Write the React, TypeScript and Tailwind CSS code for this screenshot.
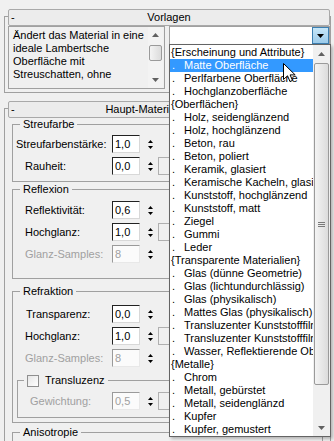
import React from "react";

const listItems: { text: string; group?: boolean; selected?: boolean }[] = [
  { text: "{Erscheinung und Attribute}", group: true },
  { text: "Matte Oberfläche", selected: true },
  { text: "Perlfarbene Oberfläche" },
  { text: "Hochglanzoberfläche" },
  { text: "{Oberflächen}", group: true },
  { text: "Holz, seidenglänzend" },
  { text: "Holz, hochglänzend" },
  { text: "Beton, rau" },
  { text: "Beton, poliert" },
  { text: "Keramik, glasiert" },
  { text: "Keramische Kacheln, glasiert" },
  { text: "Kunststoff, hochglänzend" },
  { text: "Kunststoff, matt" },
  { text: "Ziegel" },
  { text: "Gummi" },
  { text: "Leder" },
  { text: "{Transparente Materialien}", group: true },
  { text: "Glas (dünne Geometrie)" },
  { text: "Glas (lichtundurchlässig)" },
  { text: "Glas (physikalisch)" },
  { text: "Mattes Glas (physikalisch)" },
  { text: "Transluzenter Kunststofffilm (matt)" },
  { text: "Transluzenter Kunststofffilm (klar)" },
  { text: "Wasser, Reflektierende Oberfläche" },
  { text: "{Metalle}", group: true },
  { text: "Chrom" },
  { text: "Metall, gebürstet" },
  { text: "Metall, seidenglänzd" },
  { text: "Kupfer" },
  { text: "Kupfer, gemustert" },
];

function Spinner() {
  return (
    <div className="ml-[5px] flex h-[18px] w-[10px] flex-col items-center justify-center gap-[3px]">
      <svg width="5" height="3" viewBox="0 0 5 3">
        <path d="M2.5 0L5 3H0z" fill="#000" />
      </svg>
      <svg width="5" height="3" viewBox="0 0 5 3">
        <path d="M0 0H5L2.5 3z" fill="#000" />
      </svg>
    </div>
  );
}

function Row({
  label,
  value,
  labelClass,
  disabled,
  map,
}: {
  label: string;
  value: string;
  labelClass: string;
  disabled?: boolean;
  map?: boolean;
}) {
  return (
    <div className="flex h-[18px] items-center">
      <div className={`${labelClass} ${disabled ? "text-[#a0a0a0]" : "text-black"} shrink-0 whitespace-nowrap`}>{label}</div>
      <div
        className={`flex h-[18px] w-[28px] shrink-0 items-center border pl-[2px] ${
          disabled
            ? "border-t-[#9a9a9a] border-l-[#9a9a9a] border-r-[#e8e8e8] border-b-[#e8e8e8] bg-[#fbfbfb] text-[#a0a0a0]"
            : "border-t-[#222] border-l-[#222] border-r-[#d8d8d8] border-b-[#d8d8d8] bg-white text-black"
        }`}
      >
        {value}
      </div>
      <Spinner />
      {map && <div className="ml-[3px] h-[18px] w-[20px] shrink-0 border border-[#b0b0b0] bg-[#f0f0f0]" />}
    </div>
  );
}

function Header({ title }: { title: string }) {
  return (
    <div className="ml-[3px] -mt-[8px] flex h-[17px] w-[322px] items-center rounded-[2px] border border-[#a9a9a9] bg-[#ececec] text-black">
      <span className="w-[10px] pl-[2px]">-</span>
      <span className="flex-1 pr-[10px] text-center whitespace-nowrap">{title}</span>
    </div>
  );
}

export default function App() {
  return (
    <div className="relative h-[441px] w-[334px] overflow-hidden bg-[#f0f0f0] font-['Liberation_Sans',Arial,sans-serif] text-[11px] leading-[13px] text-black">
      {/* Vorlagen rollout */}
      <div className="ml-[4px] mt-[16px] w-[327px] border border-[#a0a0a0] pb-[3px]">
        <Header title="Vorlagen" />
        <div className="ml-[3px] flex gap-[4px]">
          <div className="flex h-[63px] w-[157px] border border-[#a0a0a0] bg-[#f0f0f0]">
            <div className="flex-1 overflow-hidden pl-[4px] pt-[2px] whitespace-nowrap">
              <div>Ändert das Material in eine</div>
              <div>ideale Lambertsche</div>
              <div>Oberfläche mit</div>
              <div>Streuschatten, ohne</div>
            </div>
            <div className="mr-px flex w-[15px] flex-col bg-[#f3f3f3]">
              <div className="flex h-[16px] items-center justify-center">
                <svg width="7" height="4" viewBox="0 0 7 4">
                  <path d="M3.5 0L7 4H0z" fill="#606060" />
                </svg>
              </div>
              <div className="mx-px mt-[2px] h-[16px] rounded-[2px] border border-[#9a9a9a] bg-gradient-to-r from-[#f4f4f4] to-[#dcdcdc]" />
              <div className="flex-1" />
              <div className="flex h-[16px] items-center justify-center">
                <svg width="7" height="4" viewBox="0 0 7 4">
                  <path d="M0 0H7L3.5 4z" fill="#606060" />
                </svg>
              </div>
            </div>
          </div>
          <div className="flex h-[19px] w-[162px] border border-[#a0a0a0] bg-white">
            <div className="flex-1" />
            <div className="flex w-[17px] items-center justify-center border border-[#3c7fb1] bg-gradient-to-b from-[#c6e6f8] to-[#9ccbea]">
              <svg width="7" height="4" viewBox="0 0 7 4">
                <path d="M0 0H7L3.5 4z" fill="#000" />
              </svg>
            </div>
          </div>
        </div>
      </div>

      {/* Haupt-Material-Parameter rollout */}
      <div className="ml-[4px] mt-[15px] h-[340px] w-[327px] border border-[#a0a0a0]">
        <Header title="Haupt-Material-Parameter" />

        <fieldset className="ml-[7px] mr-[7px] border border-[#a0a0a0] pb-[6px]">
          <legend className="ml-[7px] px-[3px]">Streufarbe</legend>
          <div className="flex flex-col gap-[4px] pt-[4px]">
            <Row label="Streufarbenstärke:" value="1,0" labelClass="w-[99px] pl-[3px]" />
            <Row label="Rauheit:" value="0,0" labelClass="w-[99px] pl-[12px]" map />
          </div>
        </fieldset>

        <fieldset className="ml-[7px] mr-[7px] mt-[1px] border border-[#a0a0a0] pb-[15px]">
          <legend className="ml-[7px] px-[3px]">Reflexion</legend>
          <div className="flex flex-col gap-[4px] pt-[5px]">
            <Row label="Reflektivität:" value="0,6" labelClass="w-[99px] pl-[12px]" />
            <Row label="Hochglanz:" value="1,0" labelClass="w-[99px] pl-[12px]" map />
            <Row label="Glanz-Samples:" value="8" labelClass="w-[99px] pl-[12px]" disabled />
          </div>
        </fieldset>

        <fieldset className="ml-[7px] mr-[7px] mt-[6px] border border-[#a0a0a0] pb-[4px]">
          <legend className="ml-[7px] px-[3px]">Refraktion</legend>
          <div className="flex flex-col gap-[4px] pt-[7px]">
            <Row label="Transparenz:" value="0,0" labelClass="w-[99px] pl-[13px]" />
            <Row label="Hochglanz:" value="1,0" labelClass="w-[99px] pl-[12px]" map />
            <Row label="Glanz-Samples:" value="8" labelClass="w-[99px] pl-[12px]" disabled />
          </div>
          <fieldset className="ml-[4px] mr-[5px] mt-[7px] border border-[#a0a0a0] pb-[7px]">
            <legend className="ml-[6px] px-[3px]">
              <div className="flex h-[13px] items-center gap-[6px]">
                <div className="h-[12px] w-[12px] border border-[#8f8f8f] bg-gradient-to-br from-[#e6e6e6] to-white" />
                <span>Transluzenz</span>
              </div>
            </legend>
            <div className="pt-[5px]">
              <Row label="Gewichtung:" value="0,5" labelClass="w-[94px] pl-[12px]" disabled map />
            </div>
          </fieldset>
        </fieldset>

        <fieldset className="ml-[7px] mr-[7px] mt-[3px] h-[60px] border border-[#a0a0a0]">
          <legend className="ml-[7px] px-[3px]">Anisotropie</legend>
        </fieldset>
      </div>

      {/* Open dropdown list */}
      <div className="absolute left-[169px] top-[44px] flex h-[393px] w-[162px] border border-[#646464] bg-white shadow-[2px_2px_3px_rgba(0,0,0,0.25)]">
        <div className="w-[143px] shrink-0 overflow-hidden pt-[1px] whitespace-nowrap">
          {listItems.map((item, i) =>
            item.group ? (
              <div key={i} className="h-[13px] pl-px text-black">
                {item.text}
              </div>
            ) : (
              <div
                key={i}
                className={`flex h-[13px] w-[143px] ${item.selected ? "bg-[#3399ff] text-white" : "text-black"}`}
              >
                <span className="w-[14px] shrink-0 pl-[2px]">.</span>
                <span className="shrink-0 whitespace-nowrap">{item.text}</span>
              </div>
            )
          )}
        </div>
        <div className="flex w-[17px] shrink-0 flex-col bg-[#f0f0f0]">
          <div className="flex h-[17px] items-center justify-center">
            <svg width="7" height="4" viewBox="0 0 7 4">
              <path d="M3.5 0L7 4H0z" fill="#606060" />
            </svg>
          </div>
          <div className="mx-px mt-px flex h-[322px] items-center justify-center rounded-[2px] border border-[#9a9a9a] bg-gradient-to-r from-[#f4f4f4] to-[#dcdcdc]">
            <div className="flex flex-col gap-px">
              <div className="h-px w-[7px] bg-[#7a7a7a]" />
              <div className="h-px w-[7px] bg-[#7a7a7a]" />
              <div className="h-px w-[7px] bg-[#7a7a7a]" />
            </div>
          </div>
          <div className="flex-1" />
          <div className="flex h-[17px] items-center justify-center">
            <svg width="7" height="4" viewBox="0 0 7 4">
              <path d="M0 0H7L3.5 4z" fill="#606060" />
            </svg>
          </div>
        </div>
      </div>

      {/* Mouse cursor */}
      <svg className="absolute left-[283px] top-[63px]" width="14" height="20" viewBox="0 0 14 20">
        <path
          d="M0.5 0.5 L0.5 16.5 L4.5 12.8 L7 18.5 L9.5 17.4 L7.1 11.9 L12.2 11.9 Z"
          fill="#fff"
          stroke="#000"
          strokeWidth="1"
          strokeLinejoin="miter"
        />
      </svg>
    </div>
  );
}
